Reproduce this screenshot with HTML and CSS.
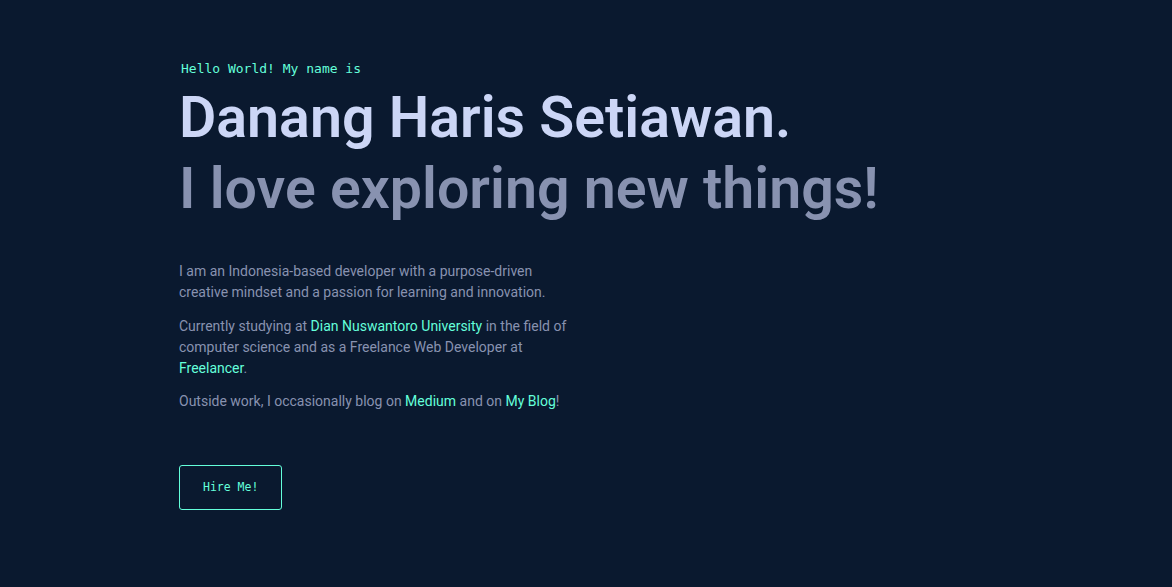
FILE: index.html
```html
<!DOCTYPE html>
<html lang="en">
<head>
<meta charset="utf-8">
<title>Danang Haris Setiawan</title>
<link rel="stylesheet" href="styles.css">
</head>
<body>
<main class="page">
  <section class="hero">
    <h1 class="hello">Hello World! My name is</h1>
    <h2 class="big-heading name">Danang Haris Setiawan.</h2>
    <h3 class="big-heading tagline">I love exploring new things!</h3>
    <div class="about">
      <p>I am an Indonesia-based developer with a purpose-driven creative mindset and a passion for learning and innovation.</p>
      <p>Currently studying at <a href="#">Dian Nuswantoro University</a> in the field of computer science and as a Freelance Web Developer at <a href="#">Freelancer</a>.</p>
      <p>Outside work, I occasionally blog on <a href="#">Medium</a> and on <a href="#">My Blog</a>!</p>
    </div>
    <a class="hire" href="#">Hire Me!</a>
  </section>
</main>
</body>
</html>
```
FILE: styles.css
```css
html, body {
  margin: 0;
  padding: 0;
  background: #0a192f;
}
body {
  height: 587px;
  overflow: hidden;
}
.page {
  padding: 60px 0 0 179px;
}
.hero {
  display: flex;
  flex-direction: column;
  align-items: flex-start;
}
.hello {
  margin: 1px 0 5px 2px;
  font-family: "DejaVu Sans Mono", monospace;
  font-size: 13px;
  line-height: 16px;
  font-weight: 400;
  color: #64ffda;
}
.big-heading {
  margin: 0;
  font-family: Roboto, "Liberation Sans", sans-serif;
  font-size: 57.3px;
  line-height: 71px;
  font-weight: 600;
}
.name {
  color: #ccd6f6;
}
.tagline {
  color: #8892b0;
}
.about {
  margin-top: 37px;
  width: 400px;
}
.about p {
  margin: 0 0 12.5px 0;
  font-family: Roboto, "Liberation Sans", sans-serif;
  font-size: 14px;
  line-height: 21px;
  color: #8892b0;
}
.about a {
  color: #64ffda;
  text-decoration: none;
}
.hire {
  margin-top: 40.5px;
  padding: 14px 23px;
  border: 1px solid #64ffda;
  border-radius: 3px;
  font-family: "DejaVu Sans Mono", monospace;
  font-size: 11.5px;
  line-height: 15px;
  color: #64ffda;
  text-decoration: none;
}
```
